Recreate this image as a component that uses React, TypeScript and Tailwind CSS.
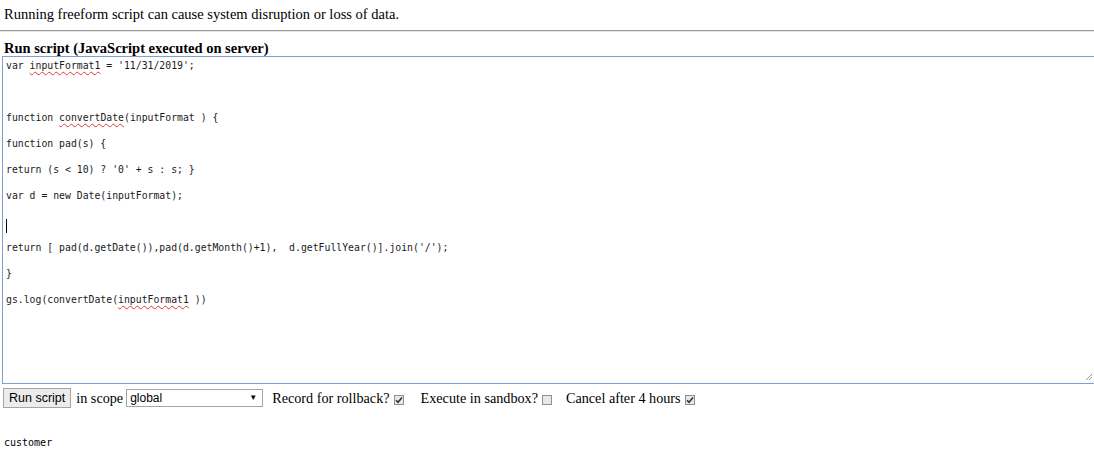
function Squiggle({ children }: { children: React.ReactNode }) {
  return (
    <span className="underline decoration-wavy decoration-[#e03a3a] decoration-1 underline-offset-2">
      {children}
    </span>
  )
}

function Check({ checked }: { checked: boolean }) {
  return (
    <span className="inline-flex h-[10px] w-[10px] items-center justify-center border border-[#8f8f8f] bg-[#e8e8e8] align-middle">
      {checked && (
        <svg width="8" height="8" viewBox="0 0 8 8">
          <path d="M1 4.2 L3 6.3 L7 1.5" stroke="#333" strokeWidth="1.6" fill="none" />
        </svg>
      )}
    </span>
  )
}

export default function App() {
  const lines: React.ReactNode[] = [
    <>var <Squiggle>inputFormat1</Squiggle> = '11/31/2019';</>,
    "",
    <>function <Squiggle>convertDate</Squiggle>(inputFormat ) {"{"}</>,
    "function pad(s) {",
    "return (s < 10) ? '0' + s : s; }",
    "var d = new Date(inputFormat);",
    <span className="inline-block h-[14px] w-px translate-y-[4px] bg-black align-middle" />,
    "return [ pad(d.getDate()),pad(d.getMonth()+1),  d.getFullYear()].join('/');",
    "}",
    <>gs.log(convertDate(<Squiggle>inputFormat1</Squiggle> ))</>,
  ]

  return (
    <div className="h-[452px] w-[1094px] overflow-hidden bg-white text-black" style={{ fontFamily: '"Liberation Serif", serif' }}>
      <p className="pl-[4px] pt-[6px] text-[14.5px] leading-[17px]">
        Running freeform script can cause system disruption or loss of data.
      </p>
      <div className="mt-[7px] h-[2px] w-full border-t border-[#9a9a9a] border-b border-b-[#e4e4e4]" />
      <h2 className="mt-[8px] pl-[4px] text-[14.5px] font-bold leading-[16px]">Run script (JavaScript executed on server)</h2>
      <div className="relative ml-[2px] h-[328px] w-[1110px] border border-[#7f9fd4] pl-[3px] pt-[2px]" style={{ fontFamily: '"DejaVu Sans Mono", monospace' }}>
        <div className="text-[9.8px] leading-[13px] text-[#1a1a1a]">
          {lines.map((l, i) => (
            <div key={i}>
              <div className="h-[13px] whitespace-pre">{l}</div>
              <div className="h-[13px]" />
            </div>
          ))}
        </div>
        <svg className="absolute bottom-[2px] left-[1082px]" width="8" height="8" viewBox="0 0 8 8">
          <path d="M7 1 L1 7 M7 4 L4 7" stroke="#999" strokeWidth="1" />
        </svg>
      </div>
      <div className="mt-[4px] flex items-center pl-[3px] text-[14.2px] leading-[16px]">
        <button className="h-[20px] border border-[#a5a5a5] bg-[#ececec] px-[5px] text-[12.5px] text-black" style={{ fontFamily: '"Liberation Sans", sans-serif' }}>
          Run script
        </button>
        <span className="ml-[5px]">in scope</span>
        <span className="ml-[3px] flex h-[18px] w-[137px] items-center justify-between border border-[#a5a5a5] pl-[3px] pr-[5px] text-[12px]" style={{ fontFamily: '"Liberation Sans", sans-serif' }}>
          global
          <span className="text-[8px]">▼</span>
        </span>
        <span className="ml-[9px]">Record for rollback?</span>
        <span className="ml-[4px]"><Check checked /></span>
        <span className="ml-[17px]">Execute in sandbox?</span>
        <span className="ml-[4px]"><Check checked={false} /></span>
        <span className="ml-[14px]">Cancel after 4 hours</span>
        <span className="ml-[4px]"><Check checked /></span>
      </div>
      <div className="mt-[28px] pl-[4px] text-[10px] leading-[13px]" style={{ fontFamily: '"DejaVu Sans Mono", monospace' }}>
        customer
      </div>
    </div>
  )
}
